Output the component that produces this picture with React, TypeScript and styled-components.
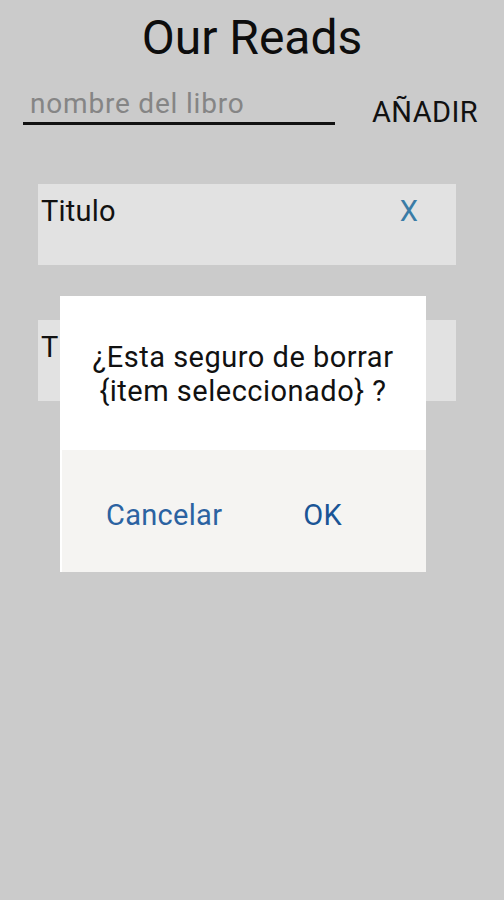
import React from "react";
import styled, { createGlobalStyle } from "styled-components";

const GlobalStyle = createGlobalStyle`
  html, body {
    margin: 0;
    padding: 0;
    background: #cbcbcb;
  }
  * { box-sizing: border-box; }
  body {
    font-family: Roboto, "Liberation Sans", sans-serif;
    color: #111;
  }
`;

const Page = styled.div`
  position: relative;
  min-height: 900px;
  background: #cbcbcb;
  padding-top: 10px;
`;

const Title = styled.h1`
  margin: 0;
  font-size: 48px;
  font-weight: 400;
  line-height: 56px;
  text-align: center;
  color: #0d0d0d;
`;

const Form = styled.div`
  display: flex;
  align-items: flex-start;
  margin-top: 21px;
  padding-left: 23px;
`;

const Input = styled.input`
  width: 312px;
  height: 38px;
  margin: 0;
  padding: 0 0 2px 7px;
  font-family: Roboto, "Liberation Sans", sans-serif;
  font-size: 28px;
  line-height: 33px;
  letter-spacing: 0.8px;
  background: transparent;
  border: none;
  border-bottom: 3px solid #111;
  outline: none;
  color: #111;
  &::placeholder {
    color: #858585;
  }
`;

const AddButton = styled.button`
  margin: 8px 0 0 37px;
  padding: 0;
  background: none;
  border: none;
  font-family: Roboto, "Liberation Sans", sans-serif;
  font-size: 29px;
  line-height: 34px;
  letter-spacing: 0.4px;
  color: #111;
`;

const List = styled.div`
  display: flex;
  flex-direction: column;
  gap: 55px;
  margin-top: 55px;
  padding-left: 38px;
`;

const Row = styled.div`
  display: flex;
  justify-content: space-between;
  align-items: flex-start;
  width: 418px;
  height: 81px;
  padding: 10px 0 0 3px;
  background: #e2e2e2;
`;

const RowTitle = styled.span`
  font-size: 29px;
  line-height: 34px;
  letter-spacing: 0.2px;
  color: #111;
`;

const RemoveButton = styled.button`
  margin: 0 38px 0 0;
  padding: 0;
  background: none;
  border: none;
  font-family: Roboto, "Liberation Sans", sans-serif;
  font-size: 29px;
  line-height: 34px;
  color: #3a7ca6;
`;

const Dialog = styled.div`
  position: absolute;
  left: 60px;
  top: 296px;
  width: 366px;
  height: 276px;
  background: #ffffff;
  display: flex;
  flex-direction: column;
`;

const DialogBody = styled.p`
  margin: 0;
  padding: 44px 0 42px;
  font-size: 29px;
  line-height: 34px;
  letter-spacing: 0.5px;
  text-align: center;
  color: #111;
`;

const DialogFooter = styled.div`
  flex: 1;
  margin-left: 2px;
  background: #f5f4f2;
  display: flex;
  align-items: flex-start;
  gap: 81px;
  padding: 48px 0 0 44px;
`;

const DialogButton = styled.button<{ $tone: "soft" | "strong" }>`
  margin: 0;
  padding: 0;
  background: none;
  border: none;
  font-family: Roboto, "Liberation Sans", sans-serif;
  font-size: 29px;
  line-height: 34px;
  letter-spacing: 0.3px;
  color: ${(p) => (p.$tone === "strong" ? "#1a5596" : "#2b62a1")};
`;

export default function App() {
  return (
    <>
      <GlobalStyle />
      <Page>
        <Title>Our Reads</Title>
        <Form>
          <Input placeholder="nombre del libro" />
          <AddButton>AÑADIR</AddButton>
        </Form>
        <List>
          <Row>
            <RowTitle>Titulo</RowTitle>
            <RemoveButton>X</RemoveButton>
          </Row>
          <Row>
            <RowTitle>Titulo</RowTitle>
            <RemoveButton>X</RemoveButton>
          </Row>
        </List>
        <Dialog>
          <DialogBody>
            ¿Esta seguro de borrar
            <br />
            {"{item seleccionado} ?"}
          </DialogBody>
          <DialogFooter>
            <DialogButton $tone="soft">Cancelar</DialogButton>
            <DialogButton $tone="strong">OK</DialogButton>
          </DialogFooter>
        </Dialog>
      </Page>
    </>
  );
}
